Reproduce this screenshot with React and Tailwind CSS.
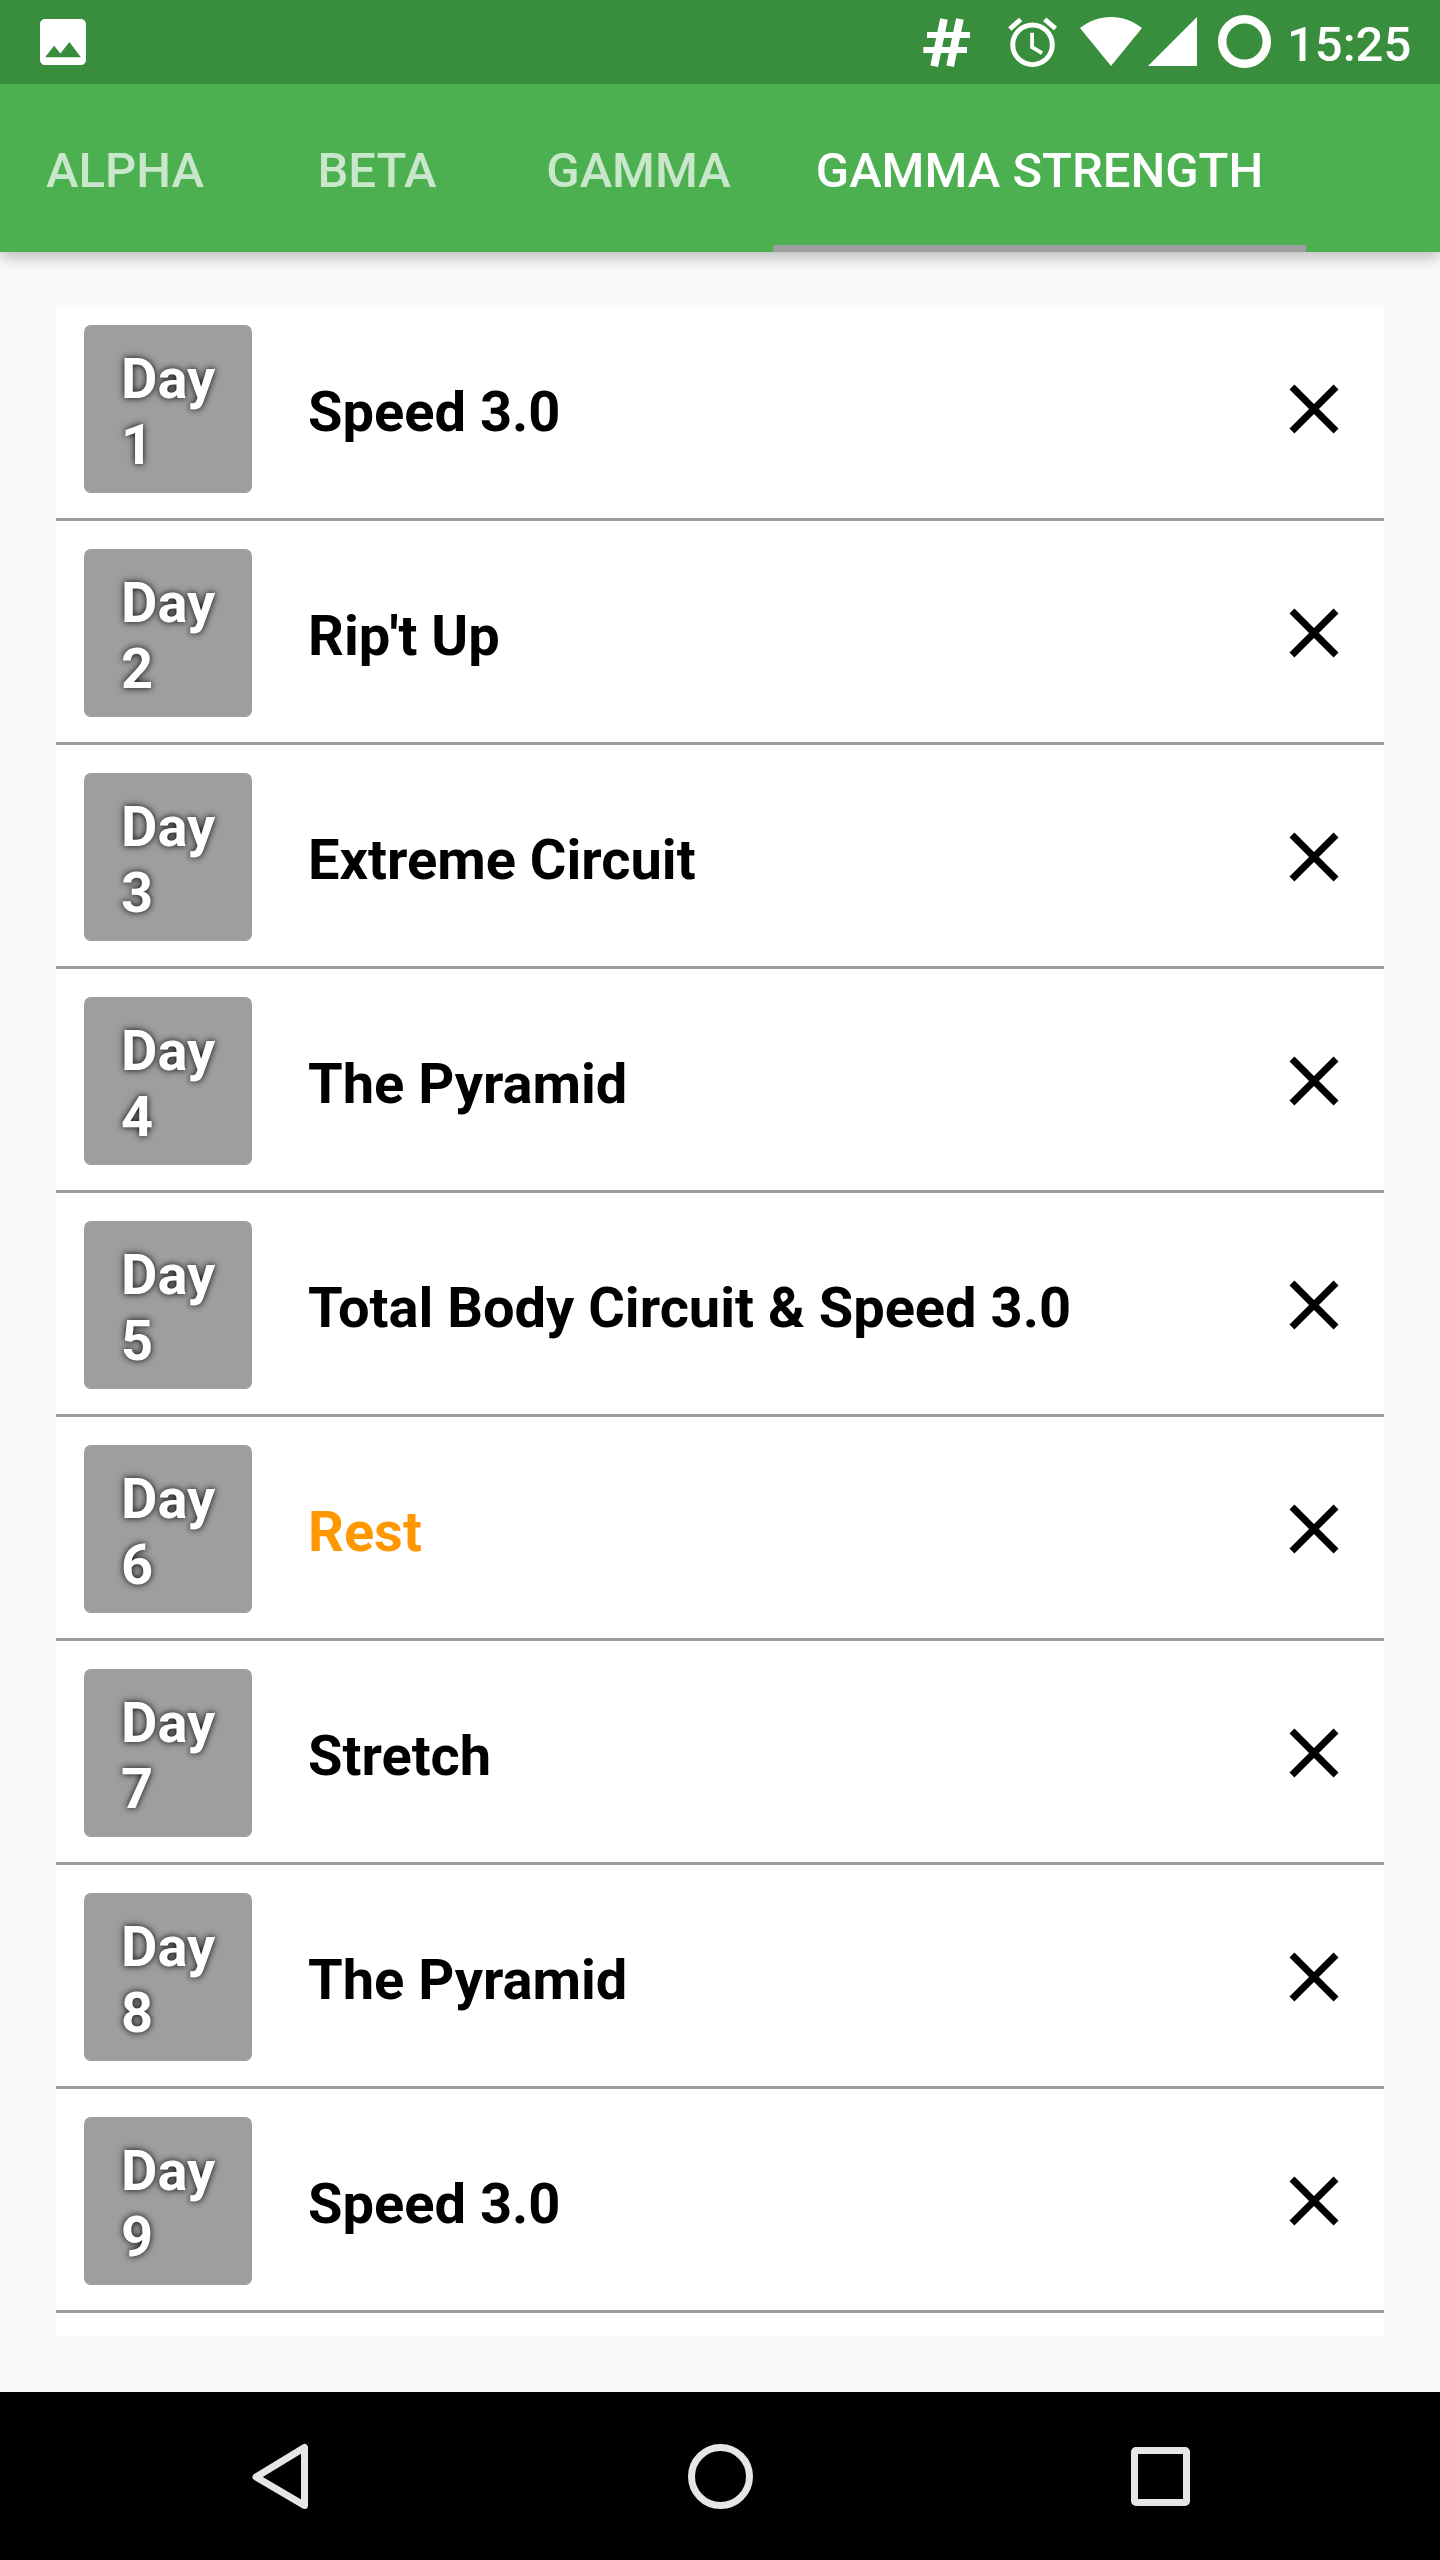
import clsx from 'clsx';

const tabs = [
  { label: 'ALPHA', width: 'w-[250px]' },
  { label: 'BETA', width: 'w-[254px]' },
  { label: 'GAMMA', width: 'w-[269px]' },
  { label: 'GAMMA STRENGTH', width: 'w-[533px]' },
];

const workouts = [
  'Speed 3.0',
  "Rip't Up",
  'Extreme Circuit',
  'The Pyramid',
  'Total Body Circuit & Speed 3.0',
  'Rest',
  'Stretch',
  'The Pyramid',
  'Speed 3.0',
];

function StatusBar() {
  return (
    <div className="relative z-20 flex h-[84px] shrink-0 items-center bg-[#388e3c] pl-[40px]">
      <svg className="h-[46px] w-[46px]" viewBox="3 3 18 18" fill="#fff">
        <path d="M21 19V5c0-1.1-.9-2-2-2H5c-1.1 0-2 .9-2 2v14c0 1.1.9 2 2 2h14c1.1 0 2-.9 2-2zM8.500 13.500l2.500 3.010L14.500 12l4.500 6H5l3.500-4.500z" />
      </svg>
      <svg className="ml-auto h-[84px] w-[352px]" viewBox="923 0 352 84" fill="#fff">
        {/* channel */}
        <path d="M944 19L934.200 66.300M959.900 19L950.100 66.300" stroke="#fff" strokeWidth="7.800" />
        <path d="M927 35h43M923.300 50h43.700" stroke="#fff" strokeWidth="5.800" />
        {/* alarm */}
        <circle cx="1032.500" cy="44.800" r="19.800" fill="none" stroke="#fff" strokeWidth="4.900" />
        <path d="M1032.100 32.700v14.500l10 6" fill="none" stroke="#fff" strokeWidth="3.800" />
        <path d="M1009.800 29l10.900-9.500M1055.500 28.500l-10.800-9.200" stroke="#fff" strokeWidth="4.900" />
        {/* wifi */}
        <path d="M1111 66l-31-38c9.500-7.300 20-11 31-11s21.500 3.700 31 11z" />
        {/* signal */}
        <path d="M1148 66h49V17z" />
        <circle cx="1244.500" cy="41.500" r="22.300" fill="none" stroke="#fff" strokeWidth="8.500" />
      </svg>
      <div className="ml-[12px] w-[153px] pt-[4px] text-[49px] leading-none font-medium text-white">15:25</div>
    </div>
  );
}

function TabBar() {
  return (
    <div className="relative z-10 flex h-[168px] shrink-0 bg-[#4caf50] shadow-[0_6px_14px_rgba(0,0,0,0.24)]">
      {tabs.map((tab, i) => {
        const active = i === tabs.length - 1;
        return (
          <div
            key={tab.label}
            className={clsx(
              'flex items-center justify-center border-b-[7px] pt-[12px] text-[49px] font-medium whitespace-nowrap',
              tab.width,
              active ? 'border-[#9e9e9e] text-white' : 'border-transparent text-white/70'
            )}
          >
            {tab.label}
          </div>
        );
      })}
    </div>
  );
}

function WorkoutRow({ day, name }) {
  return (
    <div className="flex h-[224px] shrink-0 items-center border-b-[3px] border-[#9e9e9e] px-[28px] pt-[3px]">
      <div className="h-[168px] w-[168px] shrink-0 rounded-[7px] bg-[#9e9e9e] pt-[21px] pl-[37px] text-[56px] leading-[66px] font-bold text-white [text-shadow:0_0_7px_#000]">
        <div>Day</div>
        <div>{day}</div>
      </div>
      <div className={clsx('ml-[56px] flex-1 pt-[5px] text-[56px] leading-[66px] font-bold', name === 'Rest' ? 'text-[#ff9800]' : 'text-black')}>
        {name}
      </div>
      <svg className="h-[84px] w-[84px]" viewBox="0 0 24 24">
        <path d="M19 6.410L17.590 5 12 10.590 6.410 5 5 6.410 10.590 12 5 17.590 6.410 19 12 13.410 17.590 19 19 17.590 13.410 12z" />
      </svg>
    </div>
  );
}

function NavBar() {
  return (
    <div className="flex h-[168px] shrink-0 items-center bg-black pl-[252px]">
      <svg className="h-[68px] w-[58px]" viewBox="252 2442 58 68" fill="none" stroke="#e6e6e6" strokeWidth="7" strokeLinejoin="round">
        <path d="M304.500 2447.500v58l-48.500-28.500z" />
      </svg>
      <svg className="ml-[377px] h-[66px] w-[66px]" viewBox="0 0 66 66" fill="none" stroke="#e6e6e6" strokeWidth="7">
        <circle cx="33.500" cy="33.500" r="29" />
      </svg>
      <div className="mt-px ml-[378px] h-[59px] w-[59px] rounded-[5px] border-[7px] border-[#e6e6e6]" />
    </div>
  );
}

export default function App() {
  return (
    <div className="flex h-[2560px] w-[1440px] flex-col overflow-hidden bg-[#fafafa] font-['Roboto',sans-serif]">
      <StatusBar />
      <TabBar />
      <div className="min-h-0 flex-1 p-[56px]">
        <div className="flex h-full flex-col overflow-hidden bg-white">
          {/* list is scrolled a few pixels, so the first row sits slightly above the edge */}
          <div className="-mt-[11px] flex flex-col">
            {workouts.map((name, i) => (
              <WorkoutRow key={i} day={i + 1} name={name} />
            ))}
          </div>
        </div>
      </div>
      <NavBar />
    </div>
  );
}
